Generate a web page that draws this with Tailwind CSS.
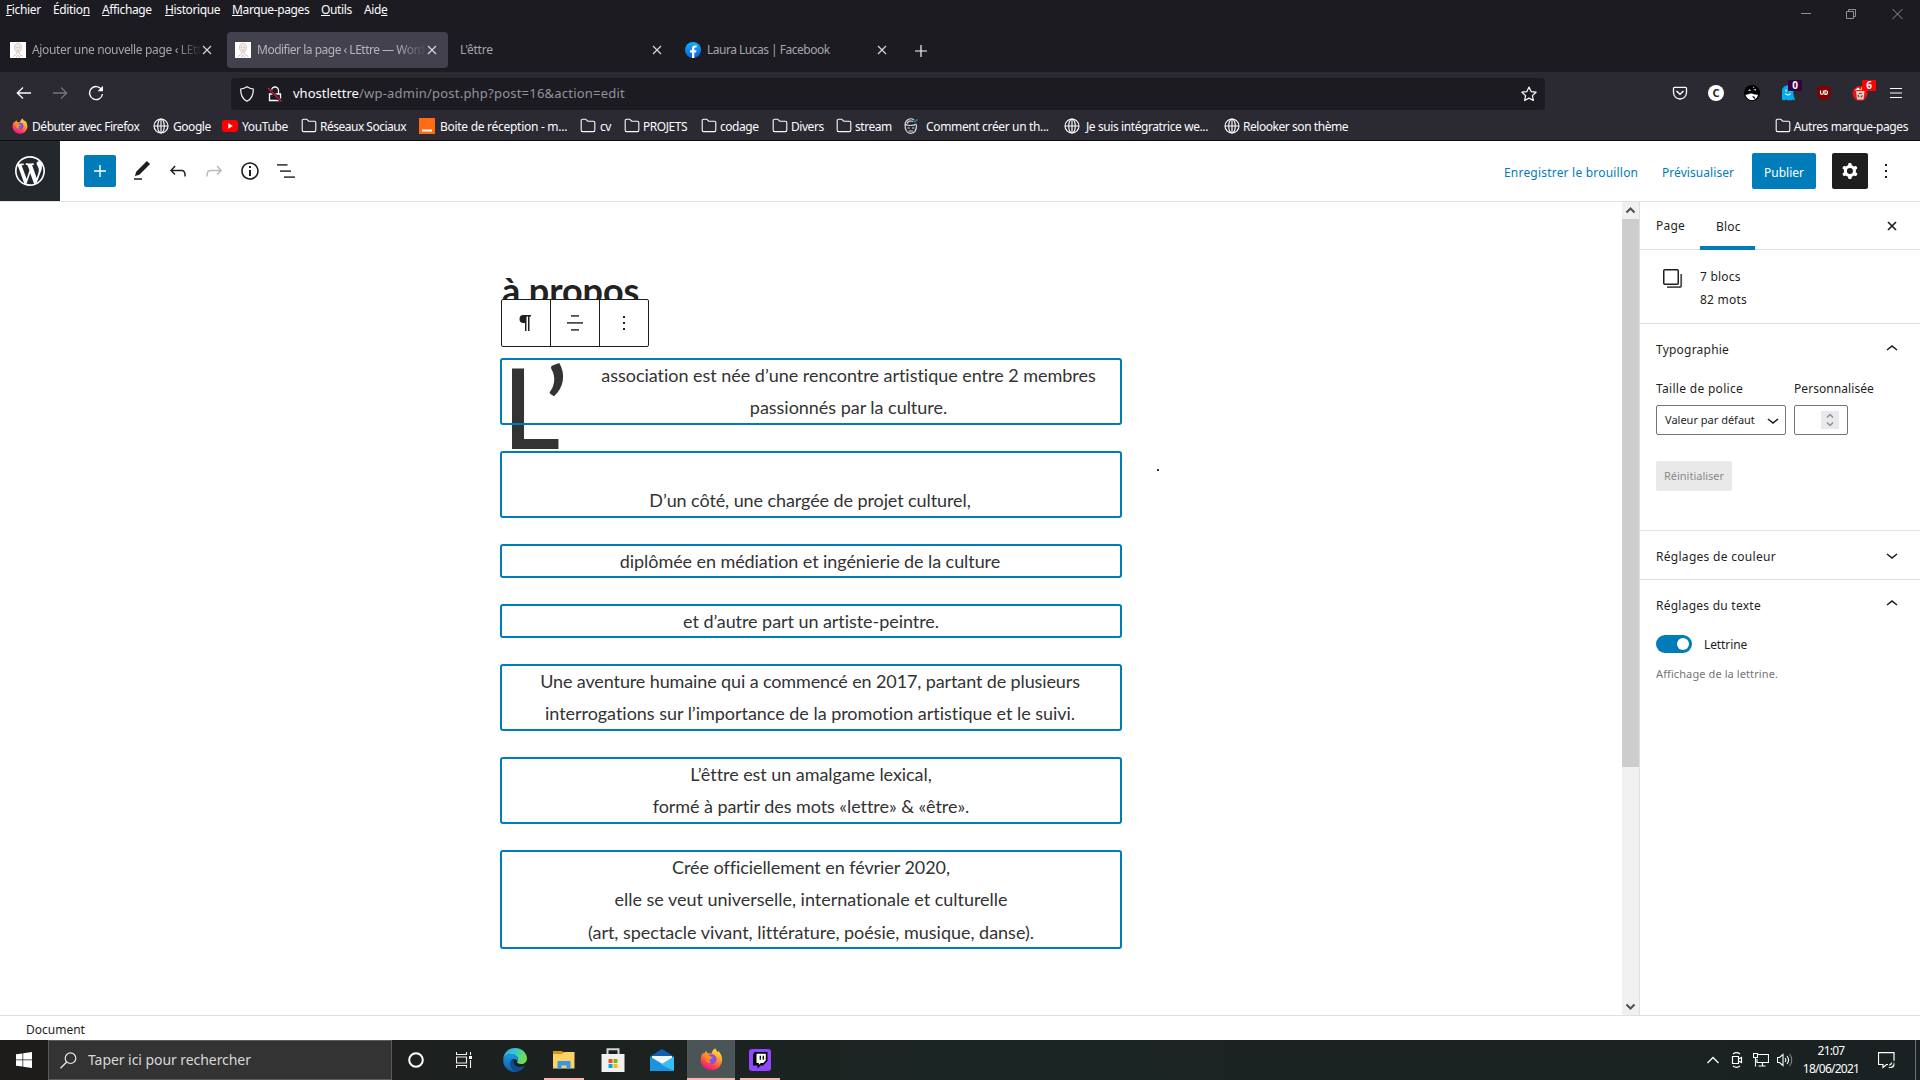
<!DOCTYPE html>
<html lang="fr">
<head>
<meta charset="utf-8">
<title>Modifier la page ‹ LEttre — WordPress</title>
<script src="https://cdn.jsdelivr.net/npm/@tailwindcss/browser@4"></script>
</head>
<body class="w-[1920px] h-[1080px] overflow-hidden flex flex-col bg-white font-['Noto_Sans','Open_Sans',sans-serif] text-xs whitespace-nowrap">

<svg class="absolute w-0 h-0">
  <defs>
    <linearGradient id="fxo" x1=".8" y1="0" x2=".3" y2="1"><stop offset="0" stop-color="#fff04a"/><stop offset=".4" stop-color="#ff9a2b"/><stop offset=".75" stop-color="#ff4050"/><stop offset="1" stop-color="#e3158a"/></linearGradient>
    <radialGradient id="fxp"><stop offset="0" stop-color="#5b6df8"/><stop offset="1" stop-color="#9a3fe0"/></radialGradient>
    <linearGradient id="fb" x1="0" y1="0" x2="0" y2="1"><stop offset="0" stop-color="#19affe"/><stop offset="1" stop-color="#0a5fdc"/></linearGradient>
    <linearGradient id="edA" x1="0" y1="0" x2="1" y2=".3"><stop offset="0" stop-color="#2fa9e0"/><stop offset=".5" stop-color="#33c6d8"/><stop offset="1" stop-color="#6fe04a"/></linearGradient>
    <linearGradient id="edB" x1="0" y1="0" x2="0" y2="1"><stop offset="0" stop-color="#1a9be0"/><stop offset="1" stop-color="#0c59a4"/></linearGradient>
  </defs>
  <symbol id="folder" viewBox="0 0 16 16"><path d="M2.500 1.200h3.200l2 2h5.800a1.300 1.300 0 0 1 1.300 1.300v7.800a1.300 1.300 0 0 1-1.300 1.300h-11a1.300 1.300 0 0 1-1.300-1.300V2.500a1.300 1.300 0 0 1 1.300-1.300z" fill="none" stroke="#fbfbfe" stroke-width="1.100"/></symbol>
  <symbol id="globe" viewBox="0 0 16 16"><g fill="none" stroke="#fbfbfe" stroke-width="1.150"><circle cx="8" cy="8" r="7"/><ellipse cx="8" cy="8" rx="3.300" ry="7"/><path d="M1 8h14M8 1v14"/></g></symbol>
  <symbol id="firefox" viewBox="0 0 24 24"><path d="M16 .8c.3 1.800 1.500 2.700 2.600 4.200.3-.7.2-1.500.2-1.500 2.700 2.500 4.400 5.900 4.300 9.200C23 18.900 18.100 23.500 12 23.500S.8 18.900.8 12.700c0-3.300 1.400-6 2.600-7.400 0 0 0 1.100.4 1.600C4.800 5.500 5.700 4.600 6.700 3.500c.2 1.200.5 1.900 1.400 2.700 1.400-.4 2.900-.1 3.900.4C12.300 4 14 1.800 16 .8z" fill="url(#fxo)"/><circle cx="12" cy="12.300" r="5.200" fill="url(#fxp)"/><path d="M5.500 8.500c2-1 4-.7 5 .4 1 .9 2.600.7 2.900 1.500-.6 1.300-2.300 1-3.200 2.400-.7 1.100.1 2.800 1.600 3.200-3.600 1.300-7.300-2.500-6.300-7.500z" fill="#ff8a26"/></symbol>
  <symbol id="face" viewBox="0 0 16 16"><path fill="#fff" d="M0 0h16v16H0z"/><path d="M4.500 5c0-5 7-5 7 0 0 3-1.500 5.500-3.500 5.500S4.500 8 4.500 5z" fill="#f0e6e6" stroke="#c9bcbc" stroke-width=".7"/><path d="M6 5.300h1.300M8.800 5.300h1.300M7 8.300h2M6.700 10.500V12L3 14.500M9.300 10.500V12l3.700 2.500M6 16l2-3 2 3" fill="none" stroke="#b9a9a9" stroke-width=".7"/></symbol>
  <symbol id="x" viewBox="0 0 10 10"><path d="M1 1l8 8M9 1L1 9" stroke="currentColor" stroke-width="1.200" fill="none"/></symbol>
  <symbol id="up" viewBox="0 0 24 24"><path d="M6.500 12.400L12 8l5.500 4.400-.9 1.200L12 10l-4.500 3.600-1-1.200z"/></symbol>
  <symbol id="down" viewBox="0 0 24 24"><path d="M17.500 11.600L12 16l-5.500-4.400.9-1.200L12 14l4.500-3.600 1 1.200z"/></symbol>
</svg>

<!-- Menu bar -->
<div class="h-5 shrink-0 bg-[#1c1b22] flex text-[#fbfbfe] tracking-[-0.37px] leading-5 pl-1.5">
  <span class="w-[47px]"><u>F</u>ichier</span><span class="w-[49px]">Éditio<u>n</u></span><span class="w-[63px]"><u>A</u>ffichage</span><span class="w-[67px]"><u>H</u>istorique</span><span class="w-[89px]"><u>M</u>arque-pages</span><span class="w-[43px]"><u>O</u>utils</span><span>Aid<u>e</u></span>
  <div class="ml-auto flex gap-[35px] pt-2 pr-[17px]">
    <svg class="w-2.5 h-3" viewBox="0 0 10 12"><path d="M0 5.500h10" stroke="#8f8f95"/></svg>
    <svg class="w-[11px] h-3" viewBox="0 0 11 12"><path d="M.5 3.500h7v7h-7zM2.500 3.500v-2h7v7h-2" fill="none" stroke="#8f8f95"/></svg>
    <svg class="w-[11px] h-3" viewBox="0 0 11 12"><path d="M.5 1l10 10M10.500 1l-10 10" stroke="#8f8f95"/></svg>
  </div>
</div>

<!-- Tabs -->
<div class="h-[52px] shrink-0 bg-[#1c1b22] flex items-start pt-3 text-[#a5a5ab] tracking-[-0.5px] leading-[38px]">
  <div class="w-[227px] h-9 flex items-center pl-2.5">
    <svg class="w-4 h-4 mr-1.5"><use href="#face"/></svg>
    <span class="w-[170px] overflow-hidden tracking-[-0.35px] [mask-image:linear-gradient(to_right,black_145px,transparent_170px)]">Ajouter une nouvelle page ‹ LEttre</span>
    <svg class="w-2.5 h-2.5 text-[#d5d5da]"><use href="#x"/></svg>
  </div>
  <div class="w-[221px] h-9 flex items-center pl-2 bg-[#42414d] rounded text-[#b4b4bb]">
    <svg class="w-4 h-4 mr-1.5"><use href="#face"/></svg>
    <span class="w-[170px] overflow-hidden [mask-image:linear-gradient(to_right,black_140px,transparent_169px)]">Modifier la page ‹ LEttre — WordPress</span>
    <svg class="w-2.5 h-2.5 text-[#d5d5da]"><use href="#x"/></svg>
  </div>
  <div class="w-[225px] h-9 flex items-center pl-3">
    <span class="w-[192px] tracking-[-0.2px]">L'êttre</span>
    <svg class="w-2.5 h-2.5 text-[#d5d5da]"><use href="#x"/></svg>
  </div>
  <div class="w-[225px] h-9 flex items-center pl-3">
    <svg class="w-4 h-4 mr-1.5" viewBox="0 0 16 16"><circle cx="8" cy="8" r="8" fill="url(#fb)"/><path d="M7 16v-5.500H5V8.200h2V6.500c0-2 1.200-3.100 3-3.100.9 0 1.600.1 1.600.1v2h-1c-1 0-1.300.6-1.300 1.200v1.500h2.200l-.4 2.300H9.300V16z" fill="#fff"/></svg>
    <span class="w-[170px]">Laura Lucas | Facebook</span>
    <svg class="w-2.5 h-2.5 text-[#d5d5da]"><use href="#x"/></svg>
  </div>
  <svg class="w-3 h-3 ml-[17px] mt-[13px]" viewBox="0 0 12 12"><path d="M6 0v12M0 6h12" stroke="#fbfbfe" stroke-width="1.200"/></svg>
</div>

<!-- Navigation bar -->
<div class="h-[39px] shrink-0 bg-[#2b2a33] flex items-center pt-1 pl-4">
  <svg class="w-4 h-4 -mt-px" viewBox="0 0 16 16"><path d="M15 8H1.500M7 2.500L1.300 8 7 13.500" fill="none" stroke="#fbfbfe" stroke-width="1.300"/></svg>
  <svg class="w-4 h-4 ml-5 -mt-px" viewBox="0 0 16 16"><path d="M1 8h13.500M9 2.500L14.700 8 9 13.500" fill="none" stroke="#75747c" stroke-width="1.300"/></svg>
  <svg class="w-4 h-4 ml-5 -mt-px" viewBox="0 0 16 16"><path d="M13.800 5A6.500 6.500 0 1 0 14.500 9" fill="none" stroke="#fbfbfe" stroke-width="1.400"/><path d="M15 .8v5.400H9.600z" fill="#fbfbfe"/></svg>
  <div class="ml-[127px] w-[1314px] h-8 rounded bg-[#1c1b22] flex items-center pl-2 text-[13px]">
    <svg class="w-4 h-4" viewBox="0 0 16 16"><path d="M8 .8C6 2.200 4 2.800 1.700 3c-.2 5.500 1.500 9.800 6.300 12.300C12.800 12.800 14.500 8.500 14.300 3 12 2.800 10 2.200 8 .8z" fill="none" stroke="#fbfbfe" stroke-width="1.200"/></svg>
    <svg class="w-4 h-4 ml-3" viewBox="0 0 16 16"><path d="M2.500 8h11v6.500h-11zM4.500 8V4.500a3.500 3.500 0 0 1 7 0V8" fill="none" stroke="#fbfbfe" stroke-width="1.300"/><path d="M1 2l13.500 13.500" stroke="#1c1b22" stroke-width="3"/><path d="M1 2l13.500 13.500" stroke="#e8113c" stroke-width="1.300"/></svg>
    <span class="ml-[10px] text-[#fbfbfe]">vhostlettre</span><span class="text-[#939299] tracking-[0.22px]">/wp-admin/post.php?post=16&amp;action=edit</span>
    <svg class="w-4 h-4 ml-auto mr-2" viewBox="0 0 16 16"><path d="M8 1l2.100 4.600 5 .6-3.700 3.400 1 4.900L8 12.100l-4.400 2.400 1-4.900L.9 6.200l5-.6z" fill="none" stroke="#fbfbfe" stroke-width="1.200" stroke-linejoin="round"/></svg>
  </div>
  <div class="ml-auto flex items-center gap-5 pr-4 -mt-0.5">
    <svg class="w-4 h-4" viewBox="0 0 16 16"><path d="M2.500 2.300h11a1 1 0 0 1 1 1V7.500a6.500 6.500 0 0 1-13 0V3.300a1 1 0 0 1 1-1z" fill="none" stroke="#fbfbfe" stroke-width="1.300"/><path d="M4.500 6L8 9.300 11.500 6" fill="none" stroke="#fbfbfe" stroke-width="1.500"/></svg>
    <span class="w-4 h-4 rounded-full bg-white text-[#222] font-bold text-[11px] leading-4 text-center">C</span>
    <svg class="w-4 h-4" viewBox="0 0 16 16"><circle cx="8" cy="8" r="8" fill="#000"/><path d="M1.500 9.500c1.800 1 3.500-1.500 5.500-1 2.500.5 5 1.800 7 1-.5 3.500-3 5.500-6 5.500s-6-2-6.500-5.500zM4 5.800l1.600-1.500 1.700 1.300zM9.500 5l2.200-1.300L12 5.500zM9 1.500l1.500.7L9.300 3z" fill="#fff"/><path d="M8 11.500l2-.3 1.500 2-1 .8z" fill="#111"/></svg>
    <span class="relative w-4 h-4"><svg class="w-4 h-4" viewBox="0 0 16 16"><path d="M2 14.500V6a5.700 5.700 0 0 1 11.400 0c0 3.500 0 5 1.600 8.500-1 .9-2 .9-2.500 0-1 1.300-2.500 1.300-3 .2-1 1.100-2.200 1-2.800-.2-1 1-3.400 1.200-4.700 0z" fill="#00aef0"/><path d="M6 4.500v2M10 4.500v2M5.500 8.500c1 2 4 2 5 0" stroke="#fff" stroke-width="1.200" fill="none"/></svg><b class="absolute left-[8px] -top-[5px] w-3.5 h-[11px] rounded-[1px] bg-[#38003c] text-white text-[10px] leading-[11px] text-center">0</b></span>
    <svg class="w-4 h-4" viewBox="0 0 16 16"><path d="M8 .3c2 1.300 4 1.700 6.800 1.700v6c0 4-3 6-6.800 8-3.800-2-6.800-4-6.800-8V2C4 2 6 1.600 8 .3z" fill="#800000"/><path d="M4.500 5.500v2.700c0 1.300 2.800 1.300 2.800 0V5.500M8.900 5.500v4c3.500 0 3.500-4 0-4z" fill="none" stroke="#fff" stroke-width="1.100"/></svg>
    <span class="relative w-4 h-4"><svg class="w-4 h-4" viewBox="0 0 16 16"><circle cx="8" cy="8.500" r="7.500" fill="#e5141c"/><path d="M4 6h8.500l-.8 8.500H5z" fill="#f5c9bd"/><path d="M2.500 5.500L6 2.500l2.500 2z" fill="#fff"/><path d="M8 5l2-3.500 2 1.500-1 2.500z" fill="#ffb52e"/><circle cx="8.200" cy="10.300" r="2" fill="none" stroke="#555" stroke-width="1.200" stroke-dasharray="2.500 1.200"/></svg><b class="absolute left-[10px] -top-[5px] w-3.5 h-[11px] rounded-[1px] bg-[#ff0000] text-white text-[10px] leading-[11px] text-center">6</b></span>
    <svg class="w-4 h-4" viewBox="0 0 16 16"><path d="M2 3.500h12M2 8h12M2 12.500h12" stroke="#fbfbfe" stroke-width="1.200"/></svg>
  </div>
</div>

<!-- Bookmarks -->
<div class="h-[30px] shrink-0 bg-[#2b2a33] border-b border-[#0c0c0d] flex items-center text-[#fbfbfe] tracking-[-0.45px] pl-3 pt-0.5">
  <div class="w-[141px] flex items-center gap-1"><svg class="w-4 h-4 -mt-0.5"><use href="#firefox"/></svg>Débuter avec Firefox</div>
  <div class="w-[69px] flex items-center gap-1"><svg class="w-4 h-4 -mt-0.5"><use href="#globe"/></svg>Google</div>
  <div class="w-[79px] flex items-center gap-1 tracking-[-0.36px]"><svg class="w-4 h-4 -mt-0.5" viewBox="0 0 16 16"><rect y="2" width="16" height="12" rx="3" fill="#f00"/><path d="M6.300 5.300L10.800 8l-4.500 2.700z" fill="#fff"/></svg>YouTube</div>
  <div class="w-[118px] flex items-center gap-[3px] tracking-[-0.5px]"><svg class="w-4 h-4 -mt-0.5"><use href="#folder"/></svg>Réseaux Sociaux</div>
  <div class="w-[161px] flex items-center gap-[5px] tracking-[-0.28px]"><svg class="w-4 h-4 -mt-0.5" viewBox="0 0 16 16"><path fill="#ff6a13" d="M0 0h16v16H0z"/><path fill="#fff" d="M3 11.500h10v2H3z"/></svg>Boite de réception - m...</div>
  <div class="w-11 flex items-center gap-1"><svg class="w-4 h-4 -mt-0.5"><use href="#folder"/></svg>cv</div>
  <div class="w-[77px] flex items-center gap-[3px]"><svg class="w-4 h-4 -mt-0.5"><use href="#folder"/></svg>PROJETS</div>
  <div class="w-[71px] flex items-center gap-[3px]"><svg class="w-4 h-4 -mt-0.5"><use href="#folder"/></svg>codage</div>
  <div class="w-16 flex items-center gap-[3px]"><svg class="w-4 h-4 -mt-0.5"><use href="#folder"/></svg>Divers</div>
  <div class="w-[67px] flex items-center gap-[3px]"><svg class="w-4 h-4 -mt-0.5"><use href="#folder"/></svg>stream</div>
  <div class="w-[161px] flex items-center gap-[7px] tracking-[-0.35px]"><svg class="w-4 h-4 -mt-0.5" viewBox="0 0 16 16"><g fill="none" stroke="#d5dde0" stroke-width="1.200"><path d="M1.500 6c3 2 9 2 12 0M2 7c0 5 2 8.300 5.700 8.300S13.500 12 13.500 7M2 6C3 1 8-.5 11 2M4 5.500c1-2.500 4-3 6-2"/><path d="M4.500 10h2.300M9 10h2.300M5.500 13h4.500"/></g><path d="M11 4l3.500-2.500" stroke="#2a8fb5" stroke-width="1.500"/></svg>Comment créer un th...</div>
  <div class="w-[160px] flex items-center gap-1.5 tracking-[-0.41px]"><svg class="w-4 h-4 -mt-0.5"><use href="#globe"/></svg>Je suis intégratrice we...</div>
  <div class="flex items-center gap-[3px]"><svg class="w-4 h-4 -mt-0.5"><use href="#globe"/></svg>Relooker son thème</div>
  <div class="ml-auto pr-3 flex items-center gap-[3px] tracking-[-0.4px]"><svg class="w-4 h-4 -mt-0.5"><use href="#folder"/></svg>Autres marque-pages</div>
</div>

<!-- Editor header -->
<div class="h-[61px] shrink-0 border-b border-[#e0e0e0] flex items-center text-[#1e1e1e] fill-[#1e1e1e]">
  <div class="w-[60px] h-[60px] bg-[#23282d] flex items-center justify-center"><svg class="w-[30px] h-[30px] fill-white" viewBox="0 0 20 20"><path d="M20 10c0-5.510-4.490-10-10-10C4.480 0 0 4.490 0 10c0 5.520 4.480 10 10 10 5.510 0 10-4.480 10-10zM7.780 15.370L4.370 6.220c.55-.02 1.170-.08 1.170-.08.5-.06.44-1.130-.06-1.110 0 0-1.450.11-2.370.11-.18 0-.37 0-.58-.01C4.120 2.690 6.870 1.110 10 1.110c2.330 0 4.450.87 6.050 2.340-.68-.11-1.650.39-1.650 1.580 0 .74.45 1.360.9 2.100.35.61.55 1.360.55 2.460 0 1.490-1.400 5-1.400 5l-3.030-8.370c.54-.02.82-.17.82-.17.5-.05.44-1.250-.06-1.220 0 0-1.440.12-2.380.12-.87 0-2.330-.12-2.330-.12-.5-.03-.56 1.200-.06 1.220l.92.08 1.260 3.410zM17.410 10c.24-.64.74-1.870.43-4.250.7 1.290 1.050 2.710 1.050 4.250 0 3.290-1.730 6.240-4.400 7.780.97-2.590 1.940-5.200 2.920-7.780zM6.100 18.090C3.120 16.650 1.110 13.530 1.110 10c0-1.300.23-2.480.72-3.590C3.250 10.300 4.670 14.200 6.100 18.090zm4.030-6.630l2.580 6.980c-.86.29-1.760.45-2.710.45-.79 0-1.570-.11-2.290-.33.81-2.380 1.620-4.740 2.420-7.100z"/></svg></div>
  <div class="ml-6 w-8 h-8 rounded-[2px] bg-[#007cba] flex items-center justify-center"><svg class="w-3 h-3" viewBox="0 0 12 12"><path d="M6 0v12M0 6h12" stroke="#fff" stroke-width="1.400"/></svg></div>
  <div class="flex gap-3 ml-[14px]">
    <svg class="w-6 h-6" viewBox="0 0 24 24"><path d="M20.100 5.100L16.900 2 6.200 12.700l-1.300 4.400 4.500-1.300L20.100 5.100zM4 20.800h8v-1.500H4v1.500z"/></svg>
    <svg class="w-6 h-6" viewBox="0 0 24 24"><path d="M18.300 11.700c-.6-.6-1.400-.9-2.300-.9H6.700l2.900-3.300-1.100-1-4.500 5L8.500 16l1-1-2.700-2.700H16c.5 0 .9.2 1.300.5 1 1 1 3.400 1 4.500v.3h1.500v-.2c0-1.500 0-4.300-1.500-5.700z"/></svg>
    <svg class="w-6 h-6 opacity-30" viewBox="0 0 24 24"><path d="M15.600 6.500l-1.100 1 2.900 3.300H8c-.9 0-1.700.3-2.300.9-1.400 1.500-1.400 4.200-1.400 5.600v.2h1.500v-.3c0-1.100 0-3.500 1-4.500.3-.3.7-.5 1.300-.5h9.200L14.500 15l1.100 1.100 4.600-4.600-4.600-5z"/></svg>
    <svg class="w-6 h-6" viewBox="0 0 24 24"><path d="M12 3.200c-4.800 0-8.800 3.900-8.800 8.800 0 4.800 3.900 8.800 8.800 8.800 4.800 0 8.800-3.900 8.800-8.800 0-4.800-4-8.800-8.800-8.800zm0 16c-4 0-7.200-3.300-7.200-7.200C4.800 8 8 4.800 12 4.800s7.200 3.300 7.200 7.200c0 4-3.200 7.200-7.200 7.200zM11 17h2v-6h-2v6zm0-8h2V7h-2v2z"/></svg>
    <svg class="w-6 h-6" viewBox="0 0 24 24"><path fill="#4a4a4a" d="M3 5h10.500v1.700H3zM6 11.200h11v1.700H6zM10 17.200h11v1.700H10z"/></svg>
  </div>
  <div class="ml-auto flex items-center text-[#007cba]">
    <span class="w-[158px] pt-[3px] tracking-[0.2px]">Enregistrer le brouillon</span>
    <span class="w-[90px] pt-[3px] tracking-[0.06px]">Prévisualiser</span>
    <span class="w-16 h-9 rounded-[2px] bg-[#007cba] text-white text-center leading-[39px]">Publier</span>
    <span class="ml-4 w-9 h-9 rounded-[2px] bg-[#1e1e1e] fill-white flex items-center justify-center"><svg class="w-6 h-6" viewBox="0 0 24 24"><path fill-rule="evenodd" d="M10.289 4.836A1 1 0 0111.275 4h1.306a1 1 0 01.987.836l.244 1.466c.787.26 1.503.679 2.108 1.218l1.393-.522a1 1 0 011.216.437l.653 1.130a1 1 0 01-.23 1.273l-1.148.944a6.025 6.025 0 010 2.435l1.149.946a1 1 0 01.23 1.272l-.653 1.130a1 1 0 01-1.216.437l-1.394-.522c-.605.54-1.320.958-2.108 1.218l-.244 1.466a1 1 0 01-.987.836h-1.306a1 1 0 01-.986-.836l-.244-1.466a5.995 5.995 0 01-2.108-1.218l-1.394.522a1 1 0 01-1.217-.436l-.653-1.131a1 1 0 01.23-1.272l1.149-.946a6.026 6.026 0 010-2.435l-1.148-.944a1 1 0 01-.23-1.272l.653-1.131a1 1 0 011.217-.437l1.393.522a5.994 5.994 0 012.108-1.218l.244-1.466zM14.929 12a3 3 0 11-6 0 3 3 0 016 0z"/></svg></span>
    <svg class="w-6 h-6 ml-1.5 mr-[22px]" viewBox="0 0 24 24"><path fill="#1e1e1e" d="M11 5h2v2h-2zM11 11h2v2h-2zM11 17h2v2h-2z"/></svg>
  </div>
</div>

<div class="h-[814px] shrink-0 flex border-b border-[#e0e0e0]">
  <!-- Canvas -->
  <main class="relative w-[1622px] pl-[500px] pt-[65px] text-[#333] font-['Lato',sans-serif]">
    <h1 class="h-[91px] pl-[2px] text-4xl leading-[46px] font-bold text-[#222] tracking-[-0.1px]">à propos</h1>
    <div class="absolute left-[501px] top-[97px] w-[148px] h-[48px] rounded-[2px] border border-[#1e1e1e] bg-white flex divide-x divide-[#1e1e1e] fill-[#1e1e1e]">
      <span class="w-[49px] flex items-center justify-center pr-0.5"><svg class="w-6 h-6" viewBox="0 0 24 24"><path d="M10.500 4H18v1.500h-1.500V20H15V5.500h-1.500V20H12v-8h-1.500a4 4 0 0 1 0-8z"/></svg></span>
      <span class="w-[49px] flex items-center justify-center"><svg class="w-6 h-6" viewBox="0 0 24 24"><path fill="#4a4a4a" d="M8 4h8v1.800H8zM4 11h16v1.800H4zM8 18h8v1.800H8z"/></svg></span>
      <span class="flex-1 flex items-center justify-center"><svg class="w-6 h-6" viewBox="0 0 24 24"><path d="M11 5h2v2h-2zM11 11h2v2h-2zM11 17h2v2h-2z"/></svg></span>
    </div>
    <div class="w-[622px] flex flex-col gap-[26px] text-[18px] leading-[32.400px] text-center tracking-[-0.06px]">
      <p class="h-[67px] outline-2 -outline-offset-2 outline-[#007cba] rounded-[3px] pt-px pl-px tracking-[-0.03px]"><span class="float-left w-[74px] h-[60px] -mt-[21px] pl-px text-left text-[113px] leading-[135px] font-medium tracking-[-5px]">L’</span>association est née d’une rencontre artistique entre 2 membres<br>passionnés par la culture.</p>
      <p class="h-[67px] outline-2 -outline-offset-2 outline-[#007cba] rounded-[3px] pt-px pr-0.5 tracking-[-0.09px]"><br>D’un côté, une chargée de projet culturel,</p>
      <p class="h-[34px] outline-2 -outline-offset-2 outline-[#007cba] rounded-[3px] pt-px pr-0.5 tracking-[-0.08px]">diplômée en médiation et ingénierie de la culture</p>
      <p class="h-[34px] outline-2 -outline-offset-2 outline-[#007cba] rounded-[3px] pt-px">et d’autre part un artiste-peintre.</p>
      <p class="h-[67px] outline-2 -outline-offset-2 outline-[#007cba] rounded-[3px] pt-px pr-0.5"><span class="tracking-[-0.12px]">Une aventure humaine qui a commencé en 2017, partant de plusieurs</span><br><span class="tracking-[-0.03px]">interrogations sur l’importance de la promotion artistique et le suivi.</span></p>
      <p class="h-[67px] outline-2 -outline-offset-2 outline-[#007cba] rounded-[3px] pt-px">L’êttre est un amalgame lexical,<br>formé à partir des mots «lettre» &amp; «être».</p>
      <p class="h-[99px] outline-2 -outline-offset-2 outline-[#007cba] rounded-[3px] pt-px">Crée officiellement en février 2020,<br><span class="tracking-[-0.02px]">elle se veut universelle, internationale et culturelle<br>(art, spectacle vivant, littérature, poésie, musique, danse).</span></p>
    </div>
    <i class="absolute left-[1157px] top-[267px] w-0.5 h-0.5 bg-[#333]"></i>
  </main>
  <!-- Scrollbar -->
  <div class="w-[17px] bg-[#f0f0f0] flex flex-col items-center">
    <svg class="w-[17px] h-[17px]" viewBox="0 0 17 17"><path d="M4.500 10.500l4-4 4 4" fill="none" stroke="#505050" stroke-width="2"/></svg>
    <div class="w-full h-[548px] bg-[#cdcdcd]"></div>
    <svg class="w-[17px] h-[17px] mt-auto" viewBox="0 0 17 17"><path d="M4.500 6.500l4 4 4-4" fill="none" stroke="#505050" stroke-width="2"/></svg>
  </div>
  <!-- Settings sidebar -->
  <aside class="flex-1 border-l border-[#e0e0e0] text-[#1e1e1e] fill-[#1e1e1e] tracking-[0.22px]">
    <div class="h-12 border-b border-[#e0e0e0] flex items-center pl-4">
      <span class="w-11 pt-px">Page</span>
      <span class="w-[55px] h-12 flex items-center pl-4 border-b-4 border-[#007cba] pt-[5px] -mb-px">Bloc</span>
      <svg class="w-2.5 h-2.5 ml-auto mr-[23px]" viewBox="0 0 10 10"><path d="M1 1l8 8M9 1L1 9" stroke="#1e1e1e" stroke-width="1.700"/></svg>
    </div>
    <div class="h-[74px] border-b border-[#e0e0e0] flex pl-[23px] pt-[15px] leading-[23px]">
      <svg class="w-5 h-5 mt-1 mr-[17px]" viewBox="0 0 20 20"><rect x=".75" y=".75" width="14.500" height="14.500" rx="1" fill="none" stroke="#1e1e1e" stroke-width="1.500"/><path d="M18.200 5v11.200a2 2 0 0 1-2 2H4" fill="none" stroke="#505050" stroke-width="1.800"/></svg>
      <div>7 blocs<br>82 mots</div>
    </div>
    <div class="h-[207px] border-b border-[#e0e0e0] pl-4">
      <div class="flex items-center justify-between h-[51px] pr-4">Typographie<svg class="w-6 h-6 -mt-0.5"><use href="#up"/></svg></div>
      <div class="flex mt-[5px] leading-[18px]"><span class="w-[138px] tracking-[0.300px]">Taille de police</span><span class="tracking-[0.070px]">Personnalisée</span></div>
      <div class="flex gap-2 mt-[7px]">
        <div class="w-[130px] h-[30px] border border-[#757575] rounded-[2px] flex items-center justify-between pl-2 text-[11px] tracking-normal">Valeur par défaut<svg class="w-6 h-6"><use href="#down"/></svg></div>
        <div class="w-[54px] h-[30px] border border-[#757575] rounded-[2px] flex items-center justify-end pr-2"><svg class="w-[18px] h-[18px]" viewBox="0 0 18 18"><path fill="#e8e8ed" d="M0 0h18v18H0z"/><path d="M6 6.500l3-3 3 3M6 11.500l3 3 3-3" fill="none" stroke="#8d8d96" stroke-width="1.500"/></svg></div>
      </div>
      <div class="mt-[26px] w-[76px] h-[30px] rounded-[2px] bg-[#e9e9e9] text-[#8a8a8a] text-[11px] leading-[30px] text-center tracking-normal">Réinitialiser</div>
    </div>
    <div class="h-[49px] border-b border-[#e0e0e0] flex items-center justify-between pl-4 pr-4 tracking-[0.290px]"><span class="pt-[3px]">Réglages de couleur</span><svg class="w-6 h-6"><use href="#down"/></svg></div>
    <div class="flex items-center justify-between h-[51px] pl-4 pr-4 tracking-[0.250px]">Réglages du texte<svg class="w-6 h-6 -mt-1"><use href="#up"/></svg></div>
    <div class="flex items-center pl-4 mt-[4px] h-[18px] gap-3 tracking-[-0.1px]"><span class="w-9 h-[18px] rounded-full bg-[#007cba] flex items-center justify-end pr-[3px]"><i class="w-3 h-3 rounded-full bg-white"></i></span><span class="pt-px">Lettrine</span></div>
    <div class="pl-4 mt-[14px] text-[11px] text-[#757575] tracking-[0.100px]">Affichage de la lettrine.</div>
  </aside>
</div>

<div class="h-6 shrink-0 pl-[26px] leading-[27px] text-[#1e1e1e]">Document</div>

<!-- Taskbar -->
<div class="h-10 shrink-0 flex items-center bg-linear-to-r from-[#1d1c1a] via-[#1b2523] to-[#1a2122] text-white">
  <div class="w-12 flex justify-center"><svg class="w-4 h-4 fill-white" viewBox="0 0 16 16"><path d="M0 2.300l6.500-.9v6.200H0zM7.200 1.300L16 0v7.600H7.200zM0 8.300h6.500v6.300L0 13.700zM7.200 8.300H16V16l-8.800-1.300z"/></svg></div>
  <div class="w-[344px] h-10 border border-[#5c5c5c] bg-[#333] flex items-center pl-[11px] text-[14px] text-[#d8d8d8] tracking-[-0.06px]"><svg class="w-[17px] h-[17px] mr-[11px]" viewBox="0 0 17 17"><circle cx="10.500" cy="6.200" r="5.300" fill="none" stroke="#e8e8e8" stroke-width="1.200"/><path d="M6.700 10L.5 16.300" stroke="#e8e8e8" stroke-width="1.300"/></svg><span class="pt-px">Taper ici pour rechercher</span></div>
  <div class="flex h-10 items-center">
    <div class="w-12 flex justify-center"><svg class="w-4 h-4" viewBox="0 0 16 16"><circle cx="8" cy="8" r="6.800" fill="none" stroke="#fff" stroke-width="2"/></svg></div>
    <div class="w-[48px] flex justify-center"><svg class="w-4 h-4" viewBox="0 0 16 16"><path d="M.5 0v2.500h10V0M.5 16v-2.500h10V16M.5 5h10v6H.5zM14.500 0v3M14.500 8v8" fill="none" stroke="#f0f0f0" stroke-width="1.100"/><path fill="#fff" d="M13 4h3v3h-3z"/></svg></div>
    <div class="w-[52px] flex justify-center pl-px"><svg class="w-6 h-6" viewBox="0 0 24 24"><path d="M.3 12C.3 5 5.500 0 12 0s12 4.800 12 10.500c0 3.500-2.800 5.500-5.800 5.500-3 0-4.500-1-4.300-1.800.8-.8 1.200-1.700 1.200-2.700 0-3-3-5.500-6.800-5.500C4 6 .8 8.500.3 12z" fill="url(#edA)"/><path d="M.3 12.300C.6 8.700 4.300 6 8.300 6c3.800 0 6.800 2.500 6.800 5.500 0 .8-.3 1.500-.7 2.100-.5-1.300-1.800-2.600-3.400-2.600-3 0-4 3-3.400 5.800.7 3.700 3.600 6.200 7 7C7 25.500 0 19.500.3 12.300z" fill="url(#edB)"/><path d="M7.600 16.800C7 14 8 11 11 11c-1.500 3 .5 8 6 8 2 0 4-.8 5.200-1.400-1.700 3.300-4.700 5.800-7.600 6.200-3.400-.8-6.300-3.300-7-7z" fill="#0f4c94"/></svg></div>
    <div class="w-12 h-10 flex flex-col items-center justify-end"><svg class="w-[22px] h-[18px] mb-[9px]" viewBox="0 0 22 18"><path fill="#d9940f" d="M0 0h9l2 2v3H0z"/><path fill="#fdd264" d="M0 3h9l2-2h10.500v16.500H0z"/><path fill="#3a96dd" d="M4.500 10h13v8h-4v-3.500h-5V18h-4z"/></svg><i class="w-10 h-0.5 bg-[#ffb3b0]"></i></div>
    <div class="w-[49px] flex justify-center"><svg class="w-6 h-6" viewBox="0 0 24 24"><path d="M6.500 7V1.200h11V7" fill="none" stroke="#d5d5d5" stroke-width="2"/><path fill="#f1f1f1" d="M.5 6h23v18H.5z"/><path fill="#f25022" d="M7.500 11h4v4h-4z"/><path fill="#7fba00" d="M12.500 11h4v4h-4z"/><path fill="#00a4ef" d="M7.500 16h4v4h-4z"/><path fill="#ffb900" d="M12.500 16h4v4h-4z"/></svg></div>
    <div class="w-[50px] flex justify-center"><svg class="w-6 h-[22px]" viewBox="0 0 24 22"><path fill="#0f5fb3" d="M0 7.500L12 0l12 7.500V13H0z"/><path fill="#f4f4f4" d="M2 7h20v8H2z"/><path d="M0 7.500L24 22H0z" fill="#1b93e0"/><path d="M24 7.500L11 15.500 24 22z" fill="#34c0f4"/></svg></div>
    <div class="w-12 h-10 bg-[#4b5556] flex flex-col items-center justify-end"><svg class="w-[23px] h-6 mb-[7px]"><use href="#firefox"/></svg><i class="w-12 h-0.5 bg-[#ffb3b0]"></i></div>
    <div class="w-[50px] h-10 flex flex-col items-center justify-end"><svg class="w-[22px] h-[22px] mb-[7px]" viewBox="0 0 22 22"><rect width="22" height="22" rx="3" fill="#9147ff"/><path d="M5.500 3h13v9l-4.500 4.500h-2.500L8.500 19.500v-3H4V6z" fill="#000"/><path d="M7.500 4.700h9.300v6.800L14.300 14h-2.500l-2 2v-2H7.500z" fill="#fff"/><path d="M11.300 6.700v4M14.300 6.700v4" stroke="#000" stroke-width="1.300"/></svg><i class="w-10 h-0.5 bg-[#ffb3b0]"></i></div>
  </div>
  <div class="ml-auto flex items-center h-10">
    <svg class="w-3 h-2 mr-3" viewBox="0 0 12 8"><path d="M.5 7L6 1.500 11.500 7" fill="none" stroke="#fff" stroke-width="1.300"/></svg>
    <svg class="w-3 h-4 mr-2.5" viewBox="0 0 12 16"><path d="M1.500 4.500h6v7h-6zM7.500 7l3-1.500v5L7.500 9M2 2c2-1.500 5-1.500 7 0M2 14c2 1.500 5 1.500 7 0" fill="none" stroke="#fff" stroke-width="1.200"/></svg>
    <svg class="w-4 h-[14px] mr-2" viewBox="0 0 16 14"><path d="M5 1.500h10.500v8H4V6M9.500 9.500v3.500M5.500 13h7M.5.500h4v4h-4zM2.500 4.500v9" fill="none" stroke="#fff" stroke-width="1.100"/></svg>
    <svg class="w-4 h-4 mr-[9px]" viewBox="0 0 16 16"><path d="M.5 5.500h2L6 2.500v11l-3.500-3h-2zM8 6c1 1.200 1 2.800 0 4M10 4c2 2.500 2 5.500 0 8" fill="none" stroke="#fff" stroke-width="1.100"/><path d="M12.500 2c3 3.500 3 8.500 0 12" fill="none" stroke="#888" stroke-width="1.100"/></svg>
    <div class="w-[58px] text-center text-[12px] leading-[18px] tracking-[-0.75px]">21:07<br>18/06/2021</div>
    <svg class="w-[17px] h-[17px] ml-[18px] mr-5" viewBox="0 0 17 17"><path d="M10 12.500H8.500l-3.500 3v-3H.5V.7h15.500v8" fill="none" stroke="#fff" stroke-width="1.200"/><path d="M15.500 9.500c1 3-1 6-5.500 5.700 3 1.800 6.500.8 6.500-2.700 0-1.300-.4-2.300-1-3zM14 10c.5 2-1 4-3.500 3.500z" fill="#fff"/></svg>
    <i class="w-px h-10 bg-[#6d7374] mr-1"></i>
  </div>
</div>
</body>
</html>
